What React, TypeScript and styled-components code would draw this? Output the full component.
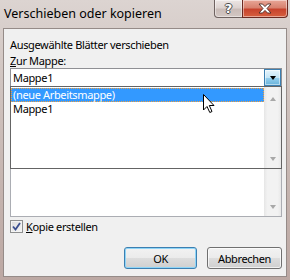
import React from 'react';
import styled, { createGlobalStyle } from 'styled-components';

const GlobalStyle = createGlobalStyle`
  html, body {
    margin: 0;
    padding: 0;
  }
  body {
    width: 290px;
    height: 280px;
    overflow: hidden;
    font-family: 'Noto Sans', 'Liberation Sans', sans-serif;
    font-size: 11px;
    letter-spacing: -0.35px;
    color: #000;
  }
`;

const Window = styled.div`
  position: relative;
  width: 290px;
  height: 280px;
  box-sizing: border-box;
  display: flex;
  flex-direction: column;
  padding: 0 3px 3px 3px;
  background: linear-gradient(180deg, #dcd4d1 0%, #d0c4c0 30%, #c4b3ae 70%, #bca8a3 100%);
`;

const TitleBar = styled.div`
  height: 28px;
  display: flex;
  align-items: flex-start;
  margin-right: -1px;
`;

const Title = styled.div`
  flex: 1;
  padding: 6px 0 0 1px;
  font-size: 12.5px;
  letter-spacing: 0;
  line-height: 16px;
  color: #000;
`;

const CaptionButton = styled.div<{ $close?: boolean }>`
  box-sizing: border-box;
  width: ${(p) => (p.$close ? 46 : 29)}px;
  height: 18px;
  display: flex;
  align-items: center;
  justify-content: center;
  border: 1px solid ${(p) => (p.$close ? '#6b2a22' : '#6e6260')};
  border-top: none;
  border-radius: ${(p) => (p.$close ? '0 0 4px 0' : '0 0 0 4px')};
  margin-left: ${(p) => (p.$close ? '-1px' : '0')};
  background: ${(p) =>
    p.$close
      ? 'linear-gradient(180deg, #e8a798 0%, #d8826f 45%, #c7432d 55%, #d6603f 100%)'
      : 'linear-gradient(180deg, #ece6e4 0%, #ddd3d0 45%, #c9bcb8 55%, #d3c7c3 100%)'};
  box-shadow: inset 0 0 0 1px rgba(255, 255, 255, 0.45);
`;

const HelpGlyph = styled.span`
  font-family: 'DejaVu Sans', sans-serif;
  font-weight: bold;
  font-size: 13px;
  line-height: 13px;
  letter-spacing: 0;
  color: #fff;
  text-shadow: -1px 0 #4b4b4b, 1px 0 #4b4b4b, 0 -1px #4b4b4b, 0 1px #4b4b4b;
`;

const Client = styled.div`
  flex: 1;
  position: relative;
  display: flex;
  flex-direction: column;
  background: #f0f0f0;
  border: 1px solid #958b88;
  padding: 8px 4px 7px 6px;
`;

const Label = styled.div<{ $gap?: number }>`
  line-height: ${(p) => (p.$gap ? 14 : 15)}px;
  margin-top: ${(p) => p.$gap ?? 0}px;
  white-space: nowrap;
`;

const Key = styled.span`
  text-decoration: underline;
`;

const ComboWrap = styled.div`
  position: relative;
`;

const Combo = styled.div`
  box-sizing: border-box;
  height: 19px;
  display: flex;
  align-items: stretch;
  border: 1px solid #8f9094;
  background: #fff;
`;

const ComboText = styled.div`
  flex: 1;
  padding-left: 2px;
  line-height: 17px;
`;

const DropButton = styled.div`
  box-sizing: border-box;
  width: 17px;
  display: flex;
  align-items: center;
  justify-content: center;
  border: 1px solid #3c7fb1;
  background: linear-gradient(180deg, #e5f4fc 0%, #c4e5f6 50%, #98d1ef 51%, #68b3db 100%);
  box-shadow: inset 0 0 0 1px rgba(255, 255, 255, 0.5);
`;

const DropList = styled.div`
  position: absolute;
  left: 0;
  right: 0;
  top: 18px;
  height: 83px;
  box-sizing: border-box;
  display: flex;
  border: 1px solid #646464;
  background: #fff;
  z-index: 2;
`;

const Items = styled.div`
  flex: 1;
  padding-top: 1px;
`;

const Item = styled.div<{ $selected?: boolean }>`
  box-sizing: border-box;
  height: 14px;
  line-height: 12px;
  padding-left: 1px;
  color: ${(p) => (p.$selected ? '#fff' : '#000')};
  background: ${(p) => (p.$selected ? '#3399ff' : 'transparent')};
  border: 1px ${(p) => (p.$selected ? 'dotted #f0a040' : 'solid transparent')};
`;

const ScrollBar = styled.div`
  width: 17px;
  display: flex;
  flex-direction: column;
  justify-content: space-between;
  align-items: center;
  padding: 10px 0 7px;
  box-sizing: border-box;
  background: linear-gradient(90deg, #e6e6e6 0%, #f2f2f2 20%, #f2f2f2 80%, #e8e8e8 100%);
`;

const Arrow = styled.div<{ $up?: boolean; $color?: string }>`
  width: 0;
  height: 0;
  border-left: 3.5px solid transparent;
  border-right: 3.5px solid transparent;
  ${(p) =>
    p.$up
      ? `border-bottom: 4px solid ${p.$color ?? '#a8a8a8'};`
      : `border-top: 4px solid ${p.$color ?? '#a8a8a8'};`}
`;

const ListBox = styled.div`
  box-sizing: border-box;
  margin-top: 17px;
  height: 113px;
  display: flex;
  justify-content: flex-end;
  border: 1px solid #abadb3;
  background: #fff;
`;

const CheckRow = styled.label`
  margin-top: 3px;
  height: 13px;
  display: flex;
  align-items: center;
  gap: 3px;
  line-height: 13px;
`;

const CheckBox = styled.span`
  box-sizing: border-box;
  width: 13px;
  height: 13px;
  display: flex;
  align-items: center;
  justify-content: center;
  border: 1px solid #8e8f8f;
  background: linear-gradient(135deg, #dcdcdc 0%, #f6f6f6 100%);
  box-shadow: inset 0 0 0 1px #f4f4f4;
`;

const ButtonRow = styled.div`
  margin-top: 14px;
  display: flex;
  justify-content: flex-end;
  gap: 10px;
`;

const Button = styled.button<{ $default?: boolean; $w: number }>`
  box-sizing: border-box;
  width: ${(p) => p.$w}px;
  height: 22px;
  padding: 0;
  font-family: inherit;
  font-size: 11px;
  letter-spacing: -0.35px;
  color: #000;
  border-radius: 3px;
  border: 1px solid ${(p) => (p.$default ? '#3c7fb1' : '#707070')};
  background: linear-gradient(180deg, #f2f2f2 0%, #ebebeb 50%, #dddddd 51%, #cfcfcf 100%);
  box-shadow: inset 0 0 0 1px ${(p) => (p.$default ? '#8fd5f7' : 'rgba(255,255,255,0.7)')};
`;

const Cursor = styled.svg`
  position: absolute;
  left: 199px;
  top: 65px;
  z-index: 3;
`;

export default function App() {
  return (
    <>
      <GlobalStyle />
      <Window>
        <TitleBar>
          <Title>Verschieben oder kopieren</Title>
          <CaptionButton>
            <HelpGlyph>?</HelpGlyph>
          </CaptionButton>
          <CaptionButton $close>
            <svg width="14" height="11" viewBox="0 0 14 11">
              <path
                d="M1 1 L4.5 1 L7 3.6 L9.5 1 L13 1 L9 5.5 L13 10 L9.5 10 L7 7.4 L4.5 10 L1 10 L5 5.5 Z"
                fill="#fff"
                stroke="#4a2a24"
                strokeWidth="0.9"
                strokeLinejoin="round"
              />
            </svg>
          </CaptionButton>
        </TitleBar>
        <Client>
          <Label>Ausgewählte Blätter verschieben</Label>
          <Label $gap={2}>
            <Key>Z</Key>ur Mappe:
          </Label>
          <ComboWrap>
            <Combo>
              <ComboText>Mappe1</ComboText>
              <DropButton>
                <Arrow $color="#000" />
              </DropButton>
            </Combo>
            <DropList>
              <Items>
                <Item $selected>(neue Arbeitsmappe)</Item>
                <Item>Mappe1</Item>
              </Items>
              <ScrollBar>
                <Arrow $up />
                <Arrow />
              </ScrollBar>
            </DropList>
          </ComboWrap>
          <ListBox>
            <ScrollBar>
              <span />
              <Arrow />
            </ScrollBar>
          </ListBox>
          <CheckRow>
            <CheckBox>
              <svg width="9" height="9" viewBox="0 0 9 9">
                <path d="M1 4.5 L3.5 7.5 L8 1" fill="none" stroke="#3b4f8f" strokeWidth="1.8" />
              </svg>
            </CheckBox>
            <span>
              <Key>K</Key>opie erstellen
            </span>
          </CheckRow>
          <ButtonRow>
            <Button $default $w={73}>OK</Button>
            <Button $w={75}>Abbrechen</Button>
          </ButtonRow>
          <Cursor width="13" height="20" viewBox="0 0 13 20">
            <path
              d="M0.5 0.5 L0.5 16 L4 12.5 L6.8 18.5 L9 17.5 L6.3 11.5 L11 11.5 Z"
              fill="#fff"
              stroke="#000"
              strokeWidth="1"
              strokeLinejoin="miter"
            />
          </Cursor>
        </Client>
      </Window>
    </>
  );
}
